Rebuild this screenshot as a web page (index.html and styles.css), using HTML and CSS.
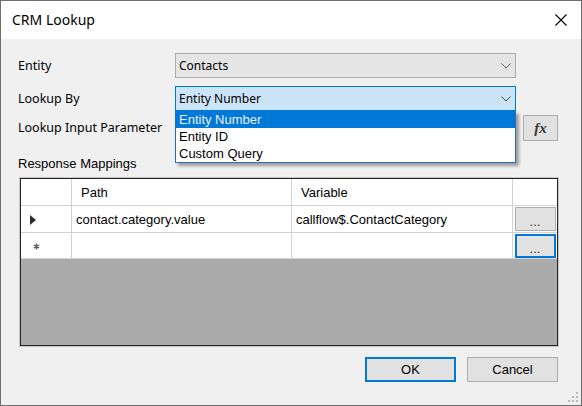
FILE: index.html
```html
<!DOCTYPE html>
<html lang="en">
<head>
<meta charset="utf-8">
<title>CRM Lookup</title>
<link rel="stylesheet" href="styles.css">
</head>
<body>
<div class="window">
  <div class="titlebar">
    <span class="title">CRM Lookup</span>
    <svg class="close" width="12" height="12" viewBox="0 0 12 12"><path d="M0.5 0.5 L11.5 11.5 M11.5 0.5 L0.5 11.5" stroke="#000" stroke-width="1.1" fill="none"/></svg>
  </div>

  <div class="content">
    <div class="row">
      <span class="label">Entity</span>
      <div class="combo">
        <span>Contacts</span>
        <svg class="chevron" width="10" height="6" viewBox="0 0 10 6"><polyline points="0.5,0.5 5,5 9.5,0.5" fill="none" stroke="#606060" stroke-width="1"/></svg>
      </div>
    </div>

    <div class="row tight">
      <span class="label">Lookup By</span>
      <div class="combo open">
        <span>Entity Number</span>
        <svg class="chevron" width="10" height="6" viewBox="0 0 10 6"><polyline points="0.5,0.5 5,5 9.5,0.5" fill="none" stroke="#505050" stroke-width="1"/></svg>
        <ul class="droplist">
          <li class="selected">Entity Number</li>
          <li>Entity ID</li>
          <li>Custom Query</li>
        </ul>
      </div>
    </div>

    <div class="row">
      <span class="label">Lookup Input Parameter</span>
      <div class="textbox"></div>
      <button class="fx">fx</button>
    </div>

    <div class="section-label">Response Mappings</div>

    <div class="grid">
      <div class="grid-rows">
        <div class="cell rowhead"></div>
        <div class="cell head">Path</div>
        <div class="cell head">Variable</div>
        <div class="cell"></div>

        <div class="cell rowhead">
          <svg width="6" height="10" viewBox="0 0 6 10"><polygon points="0,0 6,5 0,10" fill="#2a2a2a"/></svg>
        </div>
        <div class="cell">contact.category.value</div>
        <div class="cell">callflow$.ContactCategory</div>
        <div class="cell btncell"><button class="ellipsis">...</button></div>

        <div class="cell rowhead newrow">
          <svg width="7" height="7" viewBox="0 0 7 7"><path d="M3.5 0.5 V6.5 M0.8 2 L6.2 5 M6.2 2 L0.8 5" stroke="#5a5a5a" stroke-width="1.4" fill="none"/></svg>
        </div>
        <div class="cell"></div>
        <div class="cell"></div>
        <div class="cell btncell"><button class="ellipsis focus">...</button></div>
      </div>
    </div>

    <div class="actions">
      <button class="btn default">OK</button>
      <button class="btn">Cancel</button>
    </div>
  </div>

  <svg class="grip" width="10" height="10" viewBox="0 0 10 10" fill="#b8b8b8">
    <rect x="8" y="0" width="2" height="2"/>
    <rect x="4" y="4" width="2" height="2"/><rect x="8" y="4" width="2" height="2"/>
    <rect x="0" y="8" width="2" height="2"/><rect x="4" y="8" width="2" height="2"/><rect x="8" y="8" width="2" height="2"/>
  </svg>
</div>
</body>
</html>
```

FILE: styles.css
```css
* { box-sizing: border-box; }

html, body {
  margin: 0;
  padding: 0;
  background: #f0f0f0;
}

body {
  font-family: "Noto Sans", "Open Sans", sans-serif;
  color: #000;
}

.window {
  position: relative;
  width: 582px;
  height: 406px;
  border: 1px solid #6e6e6e;
  background: #f0f0f0;
  display: flex;
  flex-direction: column;
}

/* title bar */
.titlebar {
  height: 38px;
  flex: none;
  background: #fff;
  display: flex;
  align-items: center;
  justify-content: space-between;
  padding: 0 14px 0 11px;
}

.title {
  font-size: 14px;
  line-height: 18px;
}

.close { display: block; }

/* form body */
.content {
  flex: 1;
  padding: 14px 23px 0 17px;
}

.row {
  display: grid;
  grid-template-columns: 157px 341px 42px;
  align-items: center;
  margin-bottom: 8px;
}

.row.tight { margin-bottom: 4px; }

.label {
  font-size: 12.5px;
  line-height: 16px;
}

.combo {
  position: relative;
  height: 25px;
  border: 1px solid #adadad;
  background: #e5e5e5;
  display: flex;
  align-items: center;
  justify-content: space-between;
  padding: 0 4px 0 3px;
  font-size: 12px;
}

.combo.open {
  background: #cce4f7;
  border-color: #0078d7;
}

.chevron { display: block; }

.droplist {
  position: absolute;
  z-index: 2;
  top: calc(100% + 1px);
  left: -1px;
  right: -1px;
  margin: 0;
  padding: 0;
  list-style: none;
  background: #fff;
  border: 1px solid #2b6cb4;
  border-top: none;
  box-shadow: 3px 3px 3px rgba(0, 0, 0, 0.35);
  font: 13px/17px "Liberation Sans", Arial, sans-serif;
}

.droplist li {
  height: 17px;
  padding-left: 3px;
  white-space: nowrap;
}

.droplist li.selected {
  background: #0078d7;
  color: #e6eff8;
}

.textbox {
  height: 23px;
  border: 1px solid #7a7a7a;
  background: #fff;
}

.fx {
  justify-self: end;
  width: 35px;
  height: 26px;
  padding: 0;
  border: 1px solid #adadad;
  background: #e1e1e1;
  font: italic bold 15px "Liberation Serif", serif;
  color: #3a3a3a;
}

.section-label {
  margin: 15px 0 7px;
  font: 13px/15px "Liberation Sans", Arial, sans-serif;
}

/* mappings grid */
.grid {
  margin-left: 2px;
  width: 538px;
  height: 168px;
  border: 1px solid #262626;
  background: #ababab;
  box-shadow: 0 0 0 1px #c6c6c6;
  font: 13px "Liberation Sans", Arial, sans-serif;
}

.grid-rows {
  display: grid;
  grid-template-columns: 50px 219px 220px 44px;
  grid-template-rows: 26px 26px 25px;
  gap: 1px;
  padding-bottom: 1px;
  background: #d2d2d2;
}

.cell {
  background: #fff;
  display: flex;
  align-items: center;
  padding-left: 4px;
  white-space: nowrap;
  overflow: hidden;
}

.cell.head { padding-left: 9px; }

.cell.rowhead { padding-left: 9px; }
.cell.rowhead svg { display: block; margin-top: 2px; }
.cell.newrow { padding-left: 12px; }

.cell.btncell {
  padding: 0 1px 0 1px;
  justify-content: center;
}

.ellipsis {
  width: 41px;
  height: 24px;
  padding: 5px 0 0;
  border: 1px solid #adadad;
  background: #e1e1e1;
  font: 13px "Liberation Sans", Arial, sans-serif;
  color: #333;
}

.ellipsis.focus { border: 2px solid #0078d7; }

/* dialog buttons */
.actions {
  display: flex;
  justify-content: flex-end;
  gap: 11px;
  margin-top: 11px;
}

.btn {
  width: 91px;
  height: 25px;
  padding: 0;
  border: 1px solid #adadad;
  background: #e1e1e1;
  font: 13px "Liberation Sans", Arial, sans-serif;
  color: #000;
}

.btn.default { border: 2px solid #0078d7; }

.grip {
  position: absolute;
  right: 3px;
  bottom: 3px;
}
```
